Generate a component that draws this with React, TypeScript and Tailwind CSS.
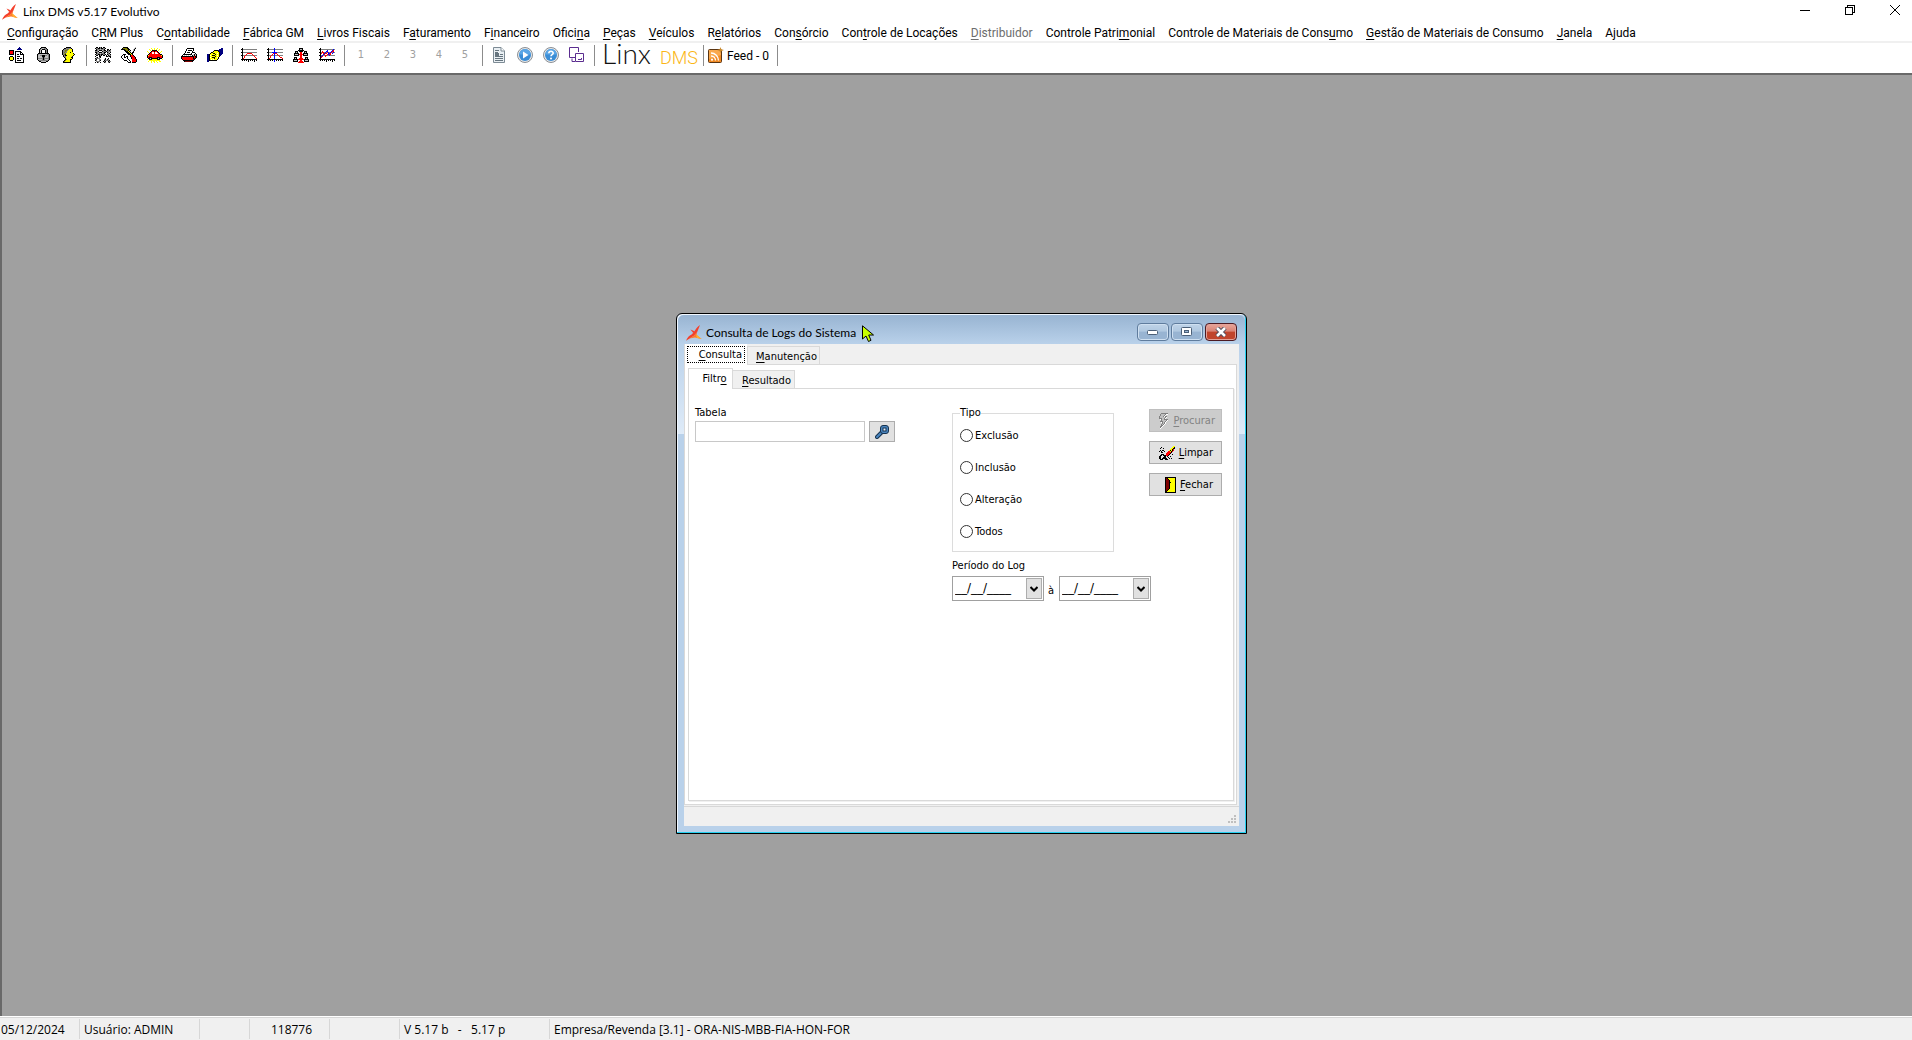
import { useState } from "react";

const PALETTE: Record<string, string> = {
  K: "#000000",
  R: "#ff0000",
  M: "#800000",
  Y: "#ffff00",
  O: "#808000",
  B: "#000080",
  b: "#0000ff",
  G: "#808080",
  S: "#c0c0c0",
  W: "#ffffff",
};

function PixelIcon({ rows }: { rows: string[] }) {
  const width = Math.max(...rows.map((r) => r.length));
  return (
    <svg width={width} height={rows.length} shapeRendering="crispEdges" aria-hidden="true" className="shrink-0">
      {rows.flatMap((row, y) =>
        [...row].map((c, x) =>
          PALETTE[c] ? <rect key={`${x}-${y}`} x={x} y={y} width="1" height="1" fill={PALETTE[c]} /> : null,
        ),
      )}
    </svg>
  );
}

const ICONS: Record<string, string[]> = {
  registers: [
    "..........B.....",
    ".........BBB....",
    "........BBBBB...",
    "KKKKK...........",
    "KRRRK.KKKKKK....",
    "KRRRK.KWWWWKK...",
    "KRRRK.KWWWWKWK..",
    "KKKKK.KWKKWKKKK.",
    "......KWWWWWWWK.",
    ".KKK..KWKKKWWWK.",
    "KYYYK.KWWWWWWWK.",
    "KYYYK.KWKKWKKWK.",
    "KYYYK.KWWWWWWWK.",
    ".KKK..KWKKKKWWK.",
    "......KWWWWWWWK.",
    "......KKKKKKKKK.",
  ],
  lock: [
    "....KKKKK....",
    "...KGSSGGK...",
    "..KGSKKKGGK..",
    "..KSK...KGK..",
    "..KSK...KGK..",
    "..KSK...KGK..",
    ".KKKKKKKKKKK.",
    "KGSSSSSSSSGGK",
    "KSSGGKKKGGSGK",
    "KSSSSKKKSSSGK",
    "KSSSSGKGSSSGK",
    "KGGGGGKGGGGGK",
    "KSSSSGKGSSSGK",
    ".KGGGGGGGGGK.",
    "..KKSSSSSKK..",
    "....KKKKK....",
  ],
  head: [
    "....KKKKK.....",
    "..KKGGGGGK....",
    ".KGGGOGYYYK...",
    "KGGOOGYYYYK...",
    "KGGOGYYYYYK...",
    "KGOGGYYYKYY...",
    "KGGOYYYYYYYK..",
    "KGOKYYYYYYYYK.",
    ".KGKKYYYYYYK..",
    ".KGGYYYYYYK...",
    "..KGYYYYYKK...",
    "...KYYYYYYK...",
    "...KOYYYKK....",
    "..KOYYYYK.....",
    ".KOYYYYYK.....",
    ".KKKKKKKK.....",
  ],
  gears: [
    ".KK.KGK.KK......",
    "KGGKKGKKGGK.....",
    ".KGGGSGGGK..KK.K",
    "KKGSKKKSGKK.KGKG",
    "GGGK...KGGGKGGGG",
    "KKGSKKKSGKK.KGSK",
    ".KGGGSGGGK..GGK.",
    "KGGKKGKKGGK.KGSK",
    ".KK.KGK.KK.K.KGG",
    "K...KK.....KKGKK",
    ".GK.GK.........K",
    "KGGGG.....K..K..",
    "GK..GG...GK.KG..",
    "KG..GK...KGGGGK.",
    ".GGGG...KGK..KGG",
    "K.KG.K...KG..GK.",
  ],
  tools: [
    "..KKKKK.......S.",
    ".KOOOOKK.....SK.",
    "KKKKOOOKK...SK..",
    "...KKOOKSK..SK..",
    "....KKKYKS..K...",
    ".....KKKYK.KK...",
    "......KKKYKK....",
    "..KKK..KKKYK....",
    ".KWK.....KRRK...",
    "KWWK.KK..KRRRK..",
    "KWWKKWK...KRRRK.",
    ".KWWWWK...KRRRK.",
    "..KWWWWK...RRRRK",
    "...KKKWWK..RRRRK",
    "......KWWK.RRRRK",
    ".......KKK.KKKK.",
  ],
  car: [
    "....Y..Y..Y.....",
    "..Y..Y.Y.Y..Y...",
    "...Y.KKKKK.Y....",
    "Y...KRRKRRK...Y.",
    ".Y.KRWWRWWRK.Y..",
    "..KRRWWRWWWRK...",
    ".KRRRRRRRRRRRKK.",
    "KYRRRRRRRRRRRRYK",
    "KRRRRRRRRRRRRRRK",
    "KRKKKRRRRRKKKRRK",
    ".KKSKKKKKKKSKKK.",
    "Y.KKKYYYYYKKK..Y",
    "..YYYYYYYYYYY...",
    ".Y..Y.YY.Y..YY..",
    "....Y..Y..Y.....",
  ],
  printer: [
    "......KKKKKKK...",
    ".....KWWWWWWK...",
    ".....KWKKKKWK...",
    "....KWWWWWWK....",
    "....KWKKKWWKKK..",
    "...KWWWWWWKWWWK.",
    "..KKKKKKKKKWSKSK",
    ".KWSWSWSWSWKSKSK",
    "KKKKKKKKKKKKKRKK",
    "KRRRRRRRRRRRKRMK",
    "KRRRRRRRRRRRKMK.",
    ".KRRRRRRRRRRMK..",
    "..KKKKKKKKKKK...",
    "...KMMMMMMMK....",
  ],
  hand: [
    "..............BB",
    "............BBBB",
    ".......KKKKBBBBB",
    "......KYYYYKBBBB",
    "....KKYYYYYYKBBB",
    "...KYYKKYYWYKBBB",
    "BBKYYYYYKYYYKBB.",
    "BBKWYKKKYYWYKB..",
    "BBKYYYYYKYYYK...",
    "BBKWYKKKYYWK....",
    "BBKYYYYKYYYK....",
    "BBKYWYWYYYK.....",
    "BBKKKKKKKK......",
    "BB..............",
  ],
  chartA: [
    ".K..............",
    "KKGGGGGGGGGGGGGG",
    ".K..............",
    ".K..............",
    "KKGGGGGGGGGGGGGG",
    ".K....RRRRR.....",
    ".K...R.....R....",
    "KKGGRGGGGGGGRGGG",
    ".K.R.........R..",
    ".K.R..........R.",
    ".KR............R",
    "KKKKKKKKKKKKKKKK",
    ".K.K.K.K.K.K.K.K",
    ".......K.....K..",
  ],
  chartB: [
    ".K.....b........",
    "KKGGGGGbGGGGGGGG",
    ".K.....b........",
    ".K.....b........",
    "KKGGGbbbbbGGGGGG",
    ".K....RbRR......",
    ".K...R.b..R.....",
    "KKGGRGGbGGGRGGGG",
    ".K.R...b....R...",
    ".K.R...b.....RR.",
    ".KR....b.......R",
    "KKKKKKKKKKKKKKKK",
    ".K.K.K.b.K.K.K.K",
    ".......b........",
  ],
  network: [
    "......KKKK......",
    "......KSSK......",
    ".....KKKKKK.....",
    "..KKK.KKKK.KKK..",
    "..KSK..RR..KSK..",
    ".KKKKK.RR.KKKKK.",
    ".KSSSKRRRRKSSSK.",
    ".KKKKK.RR.KKKKK.",
    ".......RR.......",
    ".KKK...RR...KKK.",
    ".KSK..RRRR..KSK.",
    "KKKKKRRRRRRKKKKK",
    "KSSSK..RR..KSSSK",
    "KKKKK.RRRR.KKKKK",
    ".....RRRRRR.....",
  ],
  chartC: [
    ".K..............",
    "KKGGGGGGGGGGGGbG",
    ".K......b....bR.",
    ".K.R...bb...bRR.",
    "KKGRRGbGRbGbRGbG",
    ".KR.RbRR.bbR.b..",
    ".K..bR..RbRR....",
    "KKGbGGRRGGbGGGGG",
    ".KbR..R.........",
    ".KR.............",
    ".K..............",
    "KKKKKKKKKKKKKKKK",
    ".K.K.K.K.K.K.K.K",
    ".......K.....K..",
  ],
  bolt: [
    "...GGGGGGG.",
    "..GSSSSGWW.",
    "..GSSSGW...",
    ".GSSSGWGG..",
    ".GSSSSSGW..",
    ".GGGSSGW...",
    "..WGSSGGGG.",
    "...GSSSSGW.",
    "..GGGSSGW..",
    "...WGSGW...",
    "....GSGW...",
    "...GSGW....",
    "...GGW.....",
    "..GGW......",
    "..GW.......",
    "..W........",
  ],
  eraser: [
    "..............YY",
    "..K..........YYK",
    ".K..K.......YYKK",
    "...........YYKR.",
    ".K.KK.....YKYKR.",
    "K.K..K...RRYKR..",
    "..KK....RRRRK...",
    ".......RRRRK....",
    "..KKK..RRRK..K..",
    ".KK.KKKRRK......",
    "KK...KK.K..K....",
    "KK..KKK..K......",
    "KK.KKKKK..K.K...",
    ".KKK..KKK.......",
  ],
  door: [
    "KKKKKKKKKKK",
    "KMKYYYYYYYK",
    "KMMKYYYYYYK",
    "KMMMKYYYYYK",
    "KMMMKYYYYYK",
    "KMMMKKYYYYK",
    "KMMMKYYYYYK",
    "KMMMKYYYYYK",
    "KMMMKYYYYYK",
    "KMMMKYYYYYK",
    "KMMMKYYYYYK",
    "KMMMKYYYYYK",
    "KMMKYYYYYYK",
    "KMKYYYYYYYK",
    "KKYYYYYYYYK",
    "KKKKKKKKKKK",
  ],
};

function LinxMark() {
  return (
    <svg width="16" height="16" viewBox="0 0 16 16" className="shrink-0" aria-hidden="true">
      <path d="M14 0 11 7.500 8 10.800 0 15.800C1.500 12.400 3 10.600 5.600 9.600L7.800 7.200C9.600 4.600 11 2 14 0Z" fill="#f4402c" />
      <path d="M4.500 4.500 8.600 6.200 7.400 8.200Z" fill="#f4402c" />
      <path d="M11 7 10.600 10 15.600 14 9 12.600 3.600 13.400 8 10.400Z" fill="#ff7a2a" />
      <path d="M10 10.400 11 10 15.600 14 11 13Z" fill="#ffb02e" />
    </svg>
  );
}

type MenuEntry = { text: string; key?: number; disabled?: boolean };

const MENU: MenuEntry[] = [
  { text: "Configuração", key: 0 },
  { text: "CRM Plus", key: 1 },
  { text: "Contabilidade", key: 1 },
  { text: "Fábrica GM", key: 0 },
  { text: "Livros Fiscais", key: 0 },
  { text: "Faturamento", key: 1 },
  { text: "Financeiro", key: 1 },
  { text: "Oficina", key: 5 },
  { text: "Peças", key: 0 },
  { text: "Veículos", key: 0 },
  { text: "Relatórios", key: 1 },
  { text: "Consórcio", key: 3 },
  { text: "Controle de Locações", key: 3 },
  { text: "Distribuidor", key: 0, disabled: true },
  { text: "Controle Patrimonial", key: 14 },
  { text: "Controle de Materiais de Consumo", key: 29 },
  { text: "Gestão de Materiais de Consumo", key: 0 },
  { text: "Janela", key: 0 },
  { text: "Ajuda" },
];

function Hot({ text, at }: { text: string; at?: number }) {
  if (at === undefined) return <>{text}</>;
  return (
    <span>
      {text.slice(0, at)}
      <span className="underline underline-offset-2">{text[at]}</span>
      {text.slice(at + 1)}
    </span>
  );
}

function ToolSeparator() {
  return (
    <span className="flex w-2 shrink-0 justify-center">
      <span className="h-[21px] w-px bg-[#8c8c8c]" />
    </span>
  );
}

function ToolButton({ label, children, disabled }: { label: string; children: React.ReactNode; disabled?: boolean }) {
  return (
    <button
      type="button"
      aria-label={label}
      disabled={disabled}
      className="flex h-6 w-[26px] shrink-0 items-center justify-center text-[11px] text-[#a0a0a0]"
    >
      {children}
    </button>
  );
}

function PixelGroup({ items }: { items: [string, string][] }) {
  return (
    <>
      {items.map(([label, icon]) => (
        <ToolButton key={icon} label={label}>
          <PixelIcon rows={ICONS[icon]} />
        </ToolButton>
      ))}
      <ToolSeparator />
    </>
  );
}

function TitleBar() {
  return (
    <header className="flex h-6 items-center gap-[35px] pl-0.5 pr-3 text-xs">
      <div className="flex flex-1 items-center gap-[5px]">
        <LinxMark />
        <h1 className="font-['Lato',sans-serif]">Linx DMS v5.17 Evolutivo</h1>
      </div>
      <button type="button" aria-label="Minimizar" className="flex h-full w-2.5 items-center justify-center pb-1">
        <svg width="10" height="10" shapeRendering="crispEdges">
          <path d="M0 5.5H10" stroke="#000" />
        </svg>
      </button>
      <button type="button" aria-label="Restaurar" className="flex h-full w-2.5 items-center justify-center pb-1">
        <svg width="10" height="10" fill="none" stroke="#000" shapeRendering="crispEdges">
          <path d="M.5 2.5H7.5V9.5H.5ZM2.5 2V.5H9.5V7.5H8" />
        </svg>
      </button>
      <button type="button" aria-label="Fechar" className="flex h-full w-2.5 items-center justify-center pb-1">
        <svg width="10" height="10" fill="none" stroke="#000">
          <path d="M0 0 10 10M10 0 0 10" />
        </svg>
      </button>
    </header>
  );
}

function MenuBar() {
  return (
    <nav className="flex h-[19px] items-center gap-[13px] whitespace-nowrap border-b-2 border-[#f0f0f0] pl-[7px] font-['Roboto',sans-serif] text-xs">
      {MENU.map((m) => (
        <button key={m.text} type="button" disabled={m.disabled} className="shrink-0 leading-4 disabled:text-[#6d6d6d]">
          <Hot text={m.text} at={m.key} />
        </button>
      ))}
    </nav>
  );
}

function RoundIcon({ children }: { children: React.ReactNode }) {
  return (
    <svg width="16" height="16" viewBox="0 0 16 16" aria-hidden="true">
      <circle cx="8" cy="8" r="7.5" fill="#e8e8e8" stroke="#8b9096" />
      <circle cx="8" cy="8" r="6" fill="#3a8dd6" />
      <path d="M2.4 7.5a5.6 5.6 0 0 1 11.2 0Z" fill="#5aa6e6" />
      {children}
    </svg>
  );
}

function ToolBar() {
  return (
    <div className="flex h-[30px] items-center pb-1.5 pl-1">
      <PixelGroup items={[["Cadastros", "registers"], ["Bloquear", "lock"], ["Usuário", "head"]]} />
      <PixelGroup items={[["Peças", "gears"], ["Oficina", "tools"], ["Veículos", "car"]]} />
      <PixelGroup items={[["Imprimir", "printer"], ["Negociação", "hand"]]} />
      <PixelGroup
        items={[["Curva", "chartA"], ["Distribuição", "chartB"], ["Rede", "network"], ["Comparativo", "chartC"]]}
      />
      {["1", "2", "3", "4", "5"].map((n) => (
        <ToolButton key={n} label={`Atalho ${n}`} disabled>
          <span className="font-['DejaVu_Sans_Condensed','DejaVu_Sans',sans-serif]">{n}</span>
        </ToolButton>
      ))}
      <ToolSeparator />
      <ToolButton label="Documento">
        <svg width="12" height="16" fill="none" aria-hidden="true">
          <path d="M.5.5H8L11.5 4V15.5H.5Z" fill="#e9eff3" stroke="#7d8b95" />
          <path d="M8 .5V4H11.5" fill="#fff" stroke="#7d8b95" />
          <path d="M2 3.5H6M2 5.5H5M7 7.5H10M2 9.5H10M2 11.5H10M2 13.5H10" stroke="#66757f" />
          <path d="M2 6h4v3H2z" fill="#66757f" />
        </svg>
      </ToolButton>
      <ToolButton label="Executar">
        <RoundIcon>
          <path d="M6 4.5 11.5 8 6 11.5Z" fill="#fff" />
        </RoundIcon>
      </ToolButton>
      <ToolButton label="Ajuda">
        <RoundIcon>
          <path d="M5.8 6.2C5.8 3.6 10.3 3.7 10.2 6.2 10.1 7.7 8 7.6 8 9.3" fill="none" stroke="#fff" strokeWidth="1.6" />
          <circle cx="8" cy="11.6" r="1" fill="#fff" />
        </RoundIcon>
      </ToolButton>
      <ToolButton label="Janelas">
        <svg width="16" height="16" fill="none" stroke="#5b2d90" aria-hidden="true">
          <path d="M6 10.5H.5V.5H9.5V5" />
          <path d="M3 11.5V14.5H6M6.5 6.5H14.5V14.5H6.5Z" />
          <path d="M6.5 10V8.5M9 12.5H12.5V11" />
          <path d="M3 10.5H6" />
        </svg>
      </ToolButton>
      <ToolSeparator />
      <div className="ml-1 flex w-[101px] shrink-0 items-baseline leading-none">
        <span className="w-[58px] font-['Lato',sans-serif] text-[28px] font-light leading-6 text-[#111]">Linx</span>
        <span className="font-['Roboto',sans-serif] text-lg font-light leading-6 text-[#fbb615]">DMS</span>
      </div>
      <span className="h-[21px] w-px shrink-0 bg-[#8c8c8c]" />
      <button type="button" className="ml-1 flex items-center gap-[3px] text-xs">
        <svg width="16" height="16" aria-hidden="true">
          <rect x=".5" y="2.5" width="13" height="13" rx="1" fill="#f08a24" stroke="#5a3512" />
          <path d="M1 3H13V8L1 12Z" fill="#f9a94e" />
          <g fill="none" stroke="#fff" strokeWidth="1.3">
            <path d="M3 9a4.500 4.500 0 0 1 4.500 4.500M3 6a7.500 7.500 0 0 1 7.500 7.500" />
          </g>
          <circle cx="4" cy="12.700" r="1.100" fill="#fff" />
          <path d="M12.500 0 13.300 2.300 16 3 13.500 4 12.500 6 11.500 4 9 3 11.700 2.300Z" fill="#c98a2e" />
        </svg>
        <span className="pt-px font-['Roboto',sans-serif]">Feed - 0</span>
      </button>
      <span className="ml-2 h-[21px] w-px bg-[#8c8c8c]" />
    </div>
  );
}

function CaptionButton({ label, danger, children }: { label: string; danger?: boolean; children: React.ReactNode }) {
  return (
    <button
      type="button"
      aria-label={label}
      className={
        danger
          ? "flex h-[18px] w-8 items-center justify-center rounded-sm border border-[#4c1a22] bg-linear-to-b from-[#e8a79c] from-0% via-[#d98274] via-45% to-[#c0442c] to-50% shadow-[inset_0_0_0_1px_#e3a299]"
          : "flex h-[18px] w-8 items-center justify-center rounded-sm border border-[#5f7c9d] bg-linear-to-b from-[#bfd3e8] from-0% via-[#b0c8e0] via-45% to-[#98b4d2] to-50% shadow-[inset_0_0_0_1px_#cfe0f1]"
      }
    >
      {children}
    </button>
  );
}

const TAB_IDLE = "border border-[#d9d9d9] bg-[#f0f0f0]";

function DateCombo({ label }: { label: string }) {
  const [value, setValue] = useState("__/__/____");
  return (
    <div className="flex h-[25px] w-[92px] shrink-0 border border-[#a0a0a0] bg-white p-px">
      <input
        aria-label={label}
        value={value}
        onChange={(e) => setValue(e.target.value)}
        className="h-5 min-w-0 flex-1 pl-px font-['DejaVu_Sans',sans-serif] text-xs outline-none"
      />
      <button
        type="button"
        aria-label={`Abrir calendário: ${label}`}
        className="flex w-4 items-center justify-center border border-[#adadad] bg-[#e1e1e1]"
      >
        <svg width="8" height="6" className="shrink-0" fill="none" stroke="#000" strokeWidth="2">
          <path d="M.5 1 4 4.500 7.500 1" />
        </svg>
      </button>
    </div>
  );
}

function ActionButton({ text, icon, disabled }: { text: string; icon: string; disabled?: boolean }) {
  return (
    <button
      type="button"
      disabled={disabled}
      className="flex h-[23px] w-[73px] items-center justify-end gap-1 border border-[#adadad] bg-[#e1e1e1] pr-2 disabled:border-[#bfbfbf] disabled:bg-[#cccccc] disabled:pr-1.5 disabled:text-[#838383]"
    >
      <PixelIcon rows={ICONS[icon]} />
      <Hot text={text} at={0} />
    </button>
  );
}

function FilterPane() {
  return (
    <div className="flex h-full pl-[6px] pt-4 leading-4">
      <div className="w-[257px] shrink-0">
        <label htmlFor="tabela" className="block">
          Tabela
        </label>
        <div className="flex gap-1">
          <input id="tabela" className="h-[21px] w-[170px] border border-[#c8c8c8] bg-white px-1 outline-none" />
          <button
            type="button"
            aria-label="Pesquisar tabela"
            className="flex h-[21px] w-[26px] items-center justify-center border border-[#adadad] bg-[#e1e1e1]"
          >
            <svg width="15" height="15" aria-hidden="true">
              <path d="M2 13 7 8" stroke="#16324f" strokeWidth="4" strokeLinecap="round" />
              <path d="M2 13 7 8" stroke="#4a86c0" strokeWidth="2" strokeLinecap="round" />
              <rect x="5.500" y="1.500" width="8" height="8" rx="2.500" fill="#4a86c0" stroke="#16324f" />
              <rect x="8" y="4" width="3" height="3" fill="#e4eefa" stroke="#16324f" />
            </svg>
          </button>
        </div>
      </div>

      <div className="w-[197px] shrink-0">
        <fieldset className="h-[147px] w-[162px] border border-[#dcdcdc] pl-[7px]">
          <legend className="h-4 leading-4">Tipo</legend>
          <div className="flex flex-col gap-4 pt-1.5">
            {["Exclusão", "Inclusão", "Alteração", "Todos"].map((t) => (
              <label key={t} className="flex h-4 items-center gap-0.5">
                <input
                  type="radio"
                  name="tipo"
                  className="size-[13px] shrink-0 appearance-none rounded-full border border-[#333] bg-white checked:border-4"
                />
                <span className="pt-0.5">{t}</span>
              </label>
            ))}
          </div>
        </fieldset>
        <div className="pt-1.5">Período do Log</div>
        <div className="mt-0.5 flex w-[200px] items-center">
          <DateCombo label="Período do Log, início" />
          <span className="w-[15px] pl-1 pt-1">à</span>
          <DateCombo label="Período do Log, fim" />
        </div>
      </div>

      <div className="flex flex-col gap-[9px] pt-1">
        <ActionButton text="Procurar" icon="bolt" disabled />
        <ActionButton text="Limpar" icon="eraser" />
        <ActionButton text="Fechar" icon="door" />
      </div>
    </div>
  );
}

function LogDialog() {
  return (
    <section
      aria-label="Consulta de Logs do Sistema"
      className="absolute left-[674px] top-[238px] flex h-[521px] w-[571px] flex-col rounded-t-md border border-black bg-[#b9d1ea] shadow-[inset_-1px_-1px_0_#25d0f0,inset_1px_1px_0_#f2f8ff]"
    >
      <div className="m-px mb-0 flex h-[29px] shrink-0 items-start rounded-t-md bg-linear-to-b from-[#98b4d2] to-[#b9d1ea] px-2 pt-2">
        <div className="flex items-center gap-1">
          <LinxMark />
          <h2 className="font-['Lato',sans-serif] text-xs leading-5">Consulta de Logs do Sistema</h2>
        </div>
        <svg width="13" height="18" viewBox="0 0 13 18" className="ml-1.5 mt-0.5" aria-hidden="true">
          <path d="M.5.8V14L4 11 6.500 16.500 9 15.300 6.700 10H11.500Z" fill="#c8ff00" stroke="#000" />
        </svg>
        <div className="ml-auto flex gap-0.5">
          <CaptionButton label="Minimizar">
            <svg width="12" height="6">
              <rect x=".5" y="1.500" width="10" height="4" rx="1" fill="#fff" stroke="#4b5f77" />
            </svg>
          </CaptionButton>
          <CaptionButton label="Maximizar">
            <svg width="12" height="10">
              <rect x=".5" y=".5" width="10" height="8" rx="1" fill="#fff" stroke="#4b5f77" />
              <rect x="3.500" y="3.500" width="4" height="2" fill="#9ab6d4" stroke="#4b5f77" />
            </svg>
          </CaptionButton>
          <CaptionButton label="Fechar janela" danger>
            <svg width="12" height="10">
              <path d="M2 1 10 9M10 1 2 9" stroke="#4b4b5b" strokeWidth="4.500" />
              <path d="M2 1 10 9M10 1 2 9" stroke="#fff" strokeWidth="2.500" />
            </svg>
          </CaptionButton>
        </div>
      </div>

      <div className="m-px mb-[7px] mt-0 flex min-h-0 flex-1">
        <div className="h-[90px] w-1.5 bg-linear-to-b from-[#b9d1ea] to-[#dfebf8]" />
        <div className="flex min-w-0 flex-1 flex-col bg-[#f0f0f0] font-['DejaVu_Sans_Condensed','DejaVu_Sans',sans-serif] text-[11px]">
          <div role="tablist" className="flex h-5 shrink-0 items-end">
            <button
              type="button"
              role="tab"
              aria-selected="true"
              className="z-10 -mb-px h-[21px] w-[63px] border-l border-[#d9d9d9] bg-white p-0.5"
            >
              <span className="flex h-[17px] items-center justify-end border border-dotted border-black pr-0.5 pt-0.5">
                <Hot text="Consulta" at={0} />
              </span>
            </button>
            <button
              type="button"
              role="tab"
              aria-selected="false"
              className={`${TAB_IDLE} h-[18px] w-[73px] border-b-0 pl-1.5 pt-0.5`}
            >
              <Hot text="Manutenção" at={0} />
            </button>
          </div>
          <div className="mr-0.5 flex min-h-0 flex-1 flex-col border border-[#d9d9d9] bg-white pb-[3px] pl-[3px] pr-[2px] pt-[3px]">
            <div role="tablist" className="flex h-5 shrink-0 items-end">
              <button
                type="button"
                role="tab"
                aria-selected="true"
                className="z-10 -mb-px h-[21px] w-[45px] border border-b-0 border-[#d9d9d9] bg-white pl-2"
              >
                <Hot text="Filtro" at={5} />
              </button>
              <button
                type="button"
                role="tab"
                aria-selected="false"
                className={`${TAB_IDLE} h-[18px] w-[62px] border-b-0 border-l-0 pl-1.5 pt-0.5`}
              >
                <Hot text="Resultado" at={0} />
              </button>
            </div>
            <div className="min-h-0 flex-1 border border-[#d9d9d9] bg-white shadow-[1px_1px_0_#f0f0f0]">
              <FilterPane />
            </div>
          </div>
          <div className="mt-px flex h-5 shrink-0 items-end justify-end border-t border-[#d7d7d7] p-0.5">
            <svg width="9" height="9" shapeRendering="crispEdges" fill="#bfbfbf" aria-hidden="true">
              <path d="M6 0h2v2H6zM3 3h2v2H3zM6 3h2v2H6zM0 6h2v2H0zM3 6h2v2H3zM6 6h2v2H6z" />
            </svg>
          </div>
        </div>
        <div className="h-[90px] w-1.5 bg-linear-to-b from-[#b9d1ea] to-[#dfebf8]" />
      </div>
    </section>
  );
}

function StatusBar() {
  const cell = "flex h-5 shrink-0 items-center border-r border-[#d7d7d7] pt-0.5";
  return (
    <footer className="flex h-6 shrink-0 items-center whitespace-pre border-t border-white text-xs shadow-[inset_0_1px_0_#d7d7d7]">
      <span className={`${cell} w-20 pl-px`}>05/12/2024</span>
      <span className={`${cell} w-[120px] pl-1`}>Usuário: ADMIN</span>
      <span className={`${cell} w-[50px]`} />
      <span className={`${cell} w-20 justify-center pl-1`}>118776</span>
      <span className={`${cell} w-[70px]`} />
      <span className={`${cell} w-[150px] pl-1`}>{"V 5.17 b   -   5.17 p"}</span>
      <span className="pl-1 pt-0.5">Empresa/Revenda [3.1] - ORA-NIS-MBB-FIA-HON-FOR</span>
    </footer>
  );
}

export default function App() {
  return (
    <div className="flex h-screen flex-col overflow-hidden bg-[#f0f0f0] font-['Open_Sans',sans-serif] text-black">
      <div className="shrink-0 bg-white">
        <TitleBar />
        <MenuBar />
        <ToolBar />
      </div>
      <main className="relative min-h-0 flex-1 border-l-2 border-t-2 border-[#696969] bg-[#a0a0a0]">
        <LogDialog />
      </main>
      <StatusBar />
    </div>
  );
}
